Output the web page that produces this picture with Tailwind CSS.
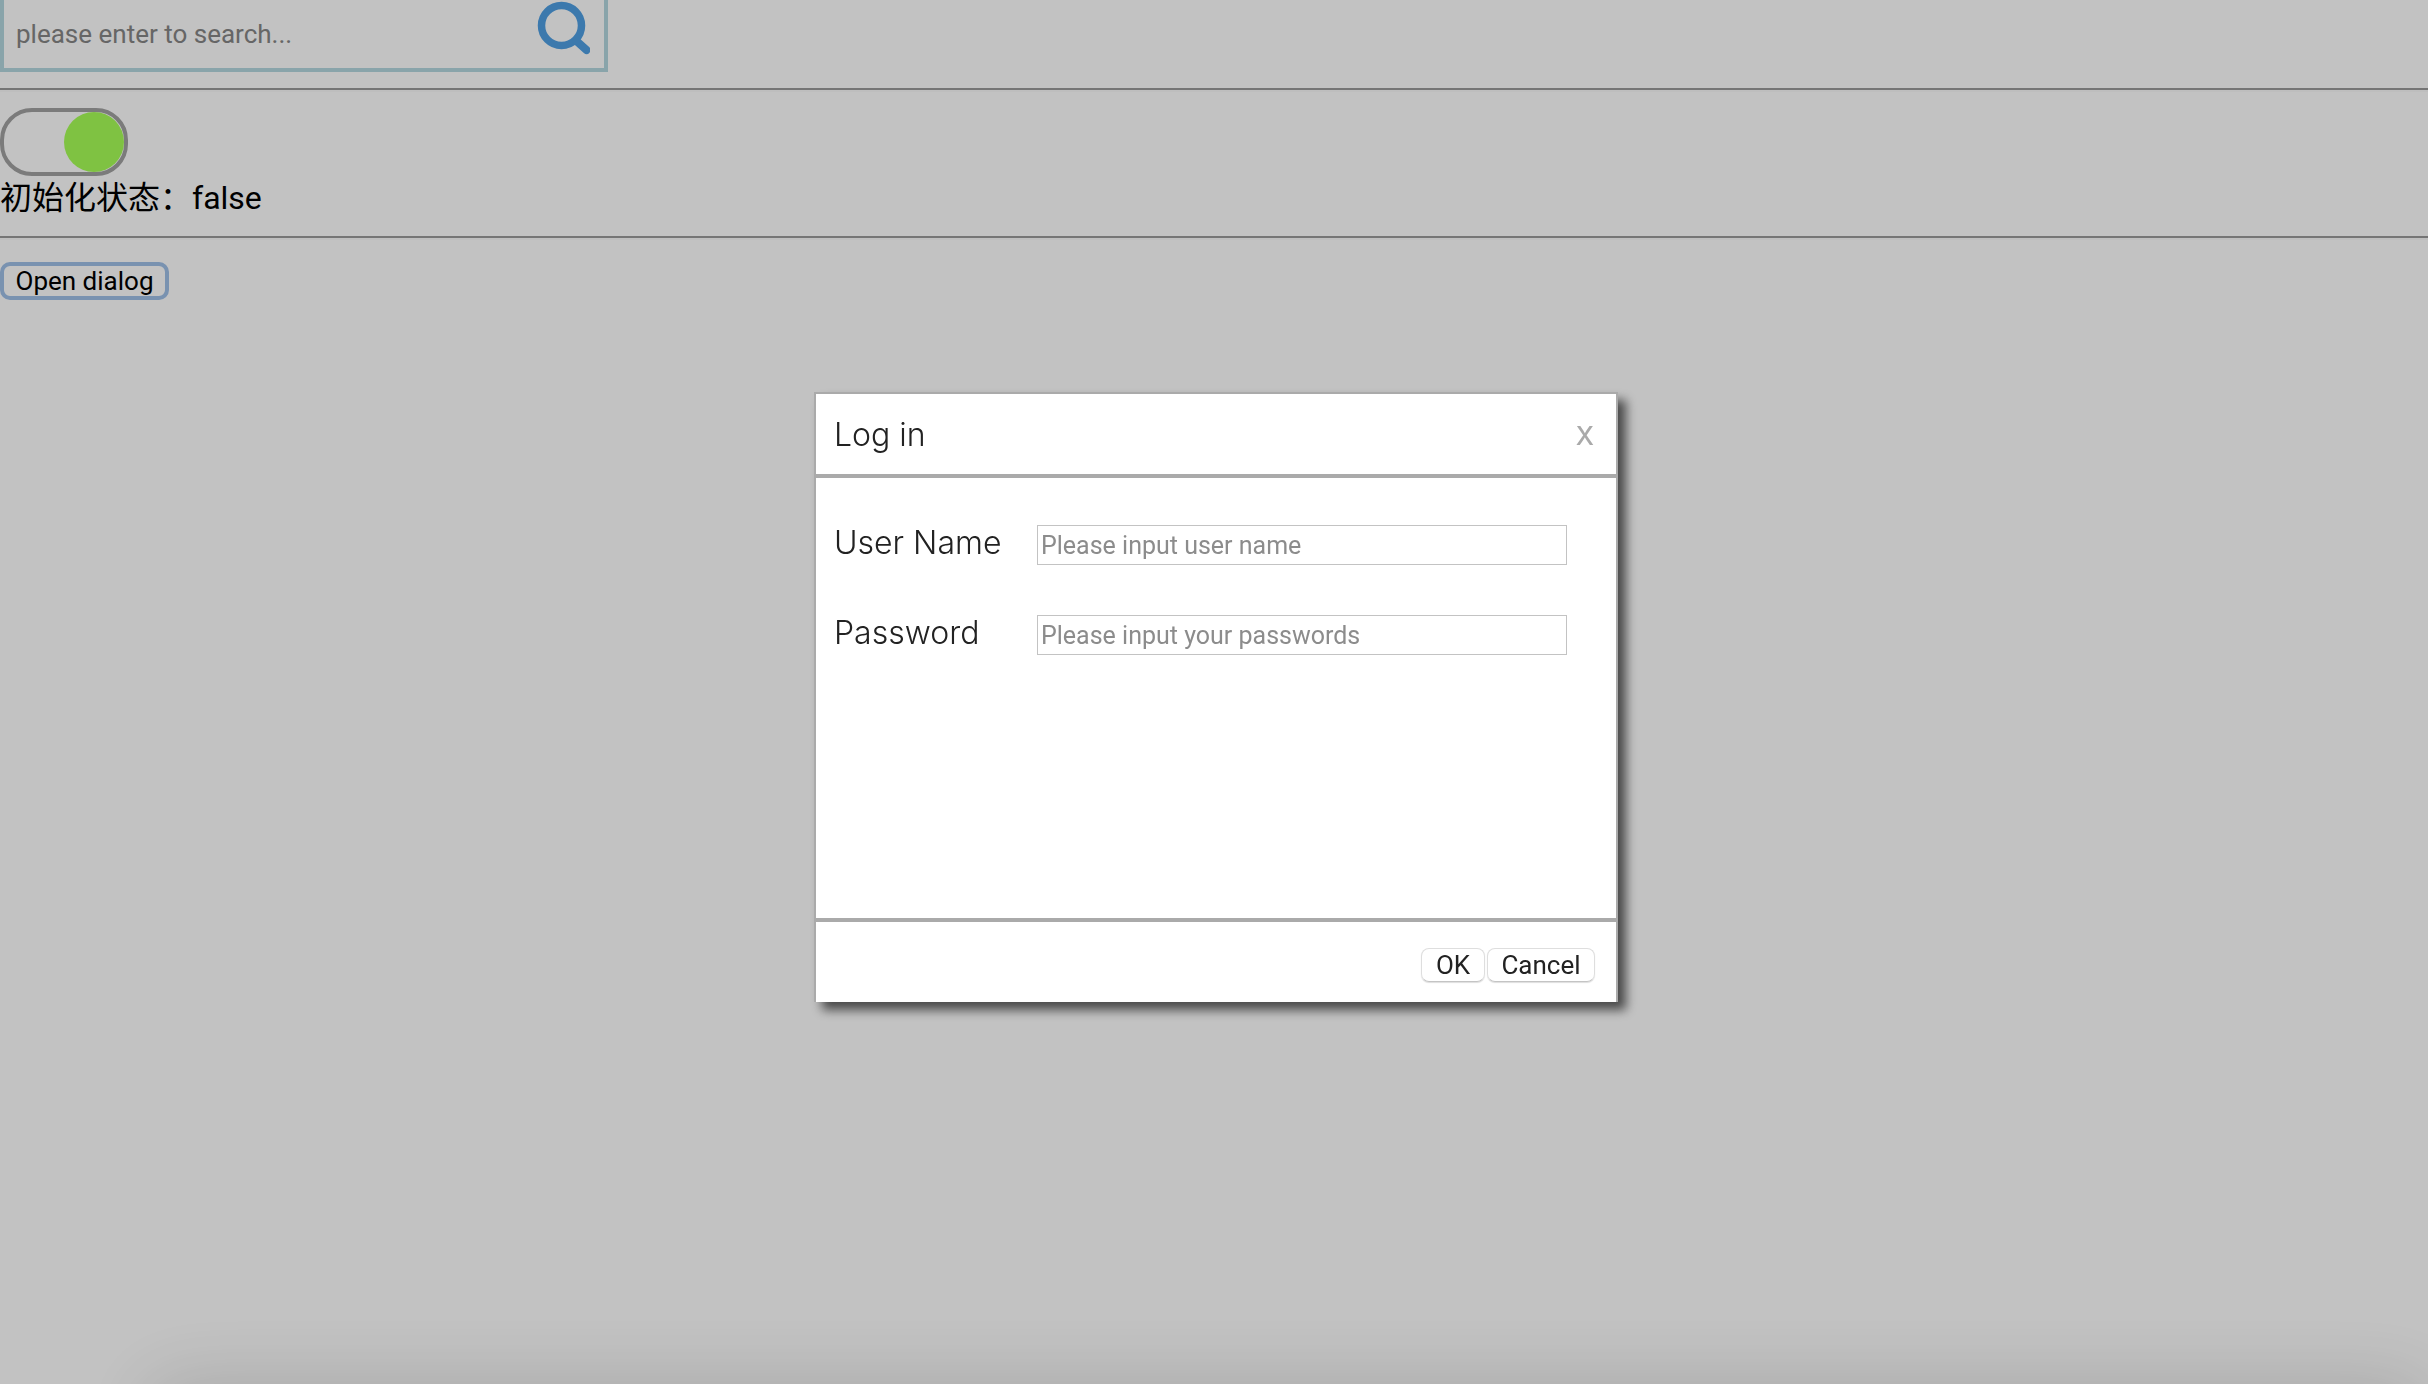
<!DOCTYPE html>
<html lang="zh">
<head>
<meta charset="utf-8">
<title>Components</title>
<script src="https://cdn.jsdelivr.net/npm/@tailwindcss/browser@4"></script>
</head>
<body class="min-h-screen overflow-hidden bg-white font-[Inter,'Noto_Sans_CJK_SC',sans-serif] text-[32px] text-black">
<main>
  <form class="flex h-[72px] w-[608px] items-start justify-between border-4 border-t-0 border-[#b4d8e0] pr-[14px]">
    <input type="text" aria-label="Search" placeholder="please enter to search..." class="h-[68px] min-w-0 flex-1 bg-transparent pl-3 font-[Roboto,sans-serif] text-[26px] outline-none placeholder:text-[#868686]">
    <button type="button" aria-label="Search button" class="h-14 w-14">
      <svg viewBox="0 0 56 56" class="h-14 w-14" fill="none" stroke="#4fa0e4" stroke-linecap="round"><circle cx="27.500" cy="25.500" r="20" stroke-width="7.500"/><path d="M43 41.500l9.500 8.500" stroke-width="8"/></svg>
    </button>
  </form>
  <hr class="my-4 h-1 border-t-2 border-b-2 border-t-[#9a9a9a] border-b-[#fafafa]">
  <button type="button" role="switch" aria-checked="true" aria-label="Toggle" class="flex h-[68px] w-32 justify-end rounded-[32px] border-4 border-[#a2a2a2]">
    <span class="size-[60px] rounded-full bg-[#a8ff57]"></span>
  </button>
  <p class="h-11 leading-[44px]">初始化状态：<span class="font-[Roboto,sans-serif]">false</span></p>
  <hr class="my-4 h-1 border-t-2 border-b-2 border-t-[#9a9a9a] border-b-[#fafafa]">
  <div class="pt-1.5">
    <button type="button" class="flex h-[38px] w-[169px] items-center justify-center rounded-[10px] border-4 border-[#a0c0e8] bg-white font-[Roboto,sans-serif] text-[26px]">Open dialog</button>
  </div>
</main>

<div class="fixed inset-0 flex items-center justify-center bg-black/24 pt-[10px] pl-1">
  <section role="dialog" aria-labelledby="title" class="flex h-[610px] w-[804px] flex-col border-2 border-b-0 border-[#aaaaaa] bg-white text-[#222] shadow-[8px_8px_10px_#4a4a4a]">
    <header class="flex h-[84px] items-center justify-between border-b-4 border-[#aaaaaa] pt-0.5 pr-[22px] pl-[18px]">
      <h1 id="title" class="text-[32px] font-light">Log in</h1>
      <button type="button" aria-label="Close" class="pt-0.5 font-[Inter,sans-serif] text-[26px] leading-9 font-medium text-[#aaa]">X</button>
    </header>
    <div class="flex flex-1 flex-col gap-[50px] pt-[47px] pl-[18px]">
      <div class="flex h-10 items-center">
        <label for="user" class="w-[203px] pb-1 font-light">User Name</label>
        <input id="user" type="text" placeholder="Please input user name" class="h-10 w-[530px] border border-[#c3c3c3] pl-[3px] font-[Roboto,sans-serif] text-[25px] placeholder:text-[#8c8c8c]">
      </div>
      <div class="flex h-10 items-center">
        <label for="pass" class="w-[203px] pb-1 font-light">Password</label>
        <input id="pass" type="password" placeholder="Please input your passwords" class="h-10 w-[530px] border border-[#c3c3c3] pl-[3px] font-[Roboto,sans-serif] text-[25px] placeholder:text-[#8c8c8c]">
      </div>
    </div>
    <footer class="flex h-[84px] items-center justify-end gap-0.5 border-t-4 border-[#aaaaaa] pt-1.5 pr-[21px] font-[Roboto,sans-serif] text-[26px]">
      <button type="button" class="flex h-[34px] w-16 items-center justify-center rounded-lg border border-[#dedede] border-b-[#c4c4c4] shadow-[0_1px_1px_#0002]">OK</button>
      <button type="button" class="flex h-[34px] w-[108px] items-center justify-center rounded-lg border border-[#dedede] border-b-[#c4c4c4] shadow-[0_1px_1px_#0002]">Cancel</button>
    </footer>
  </section>
</div>
<div class="pointer-events-none fixed top-full right-0 left-[150px] h-40 shadow-[0_0_80px_#00000026]"></div>
</body>
</html>
